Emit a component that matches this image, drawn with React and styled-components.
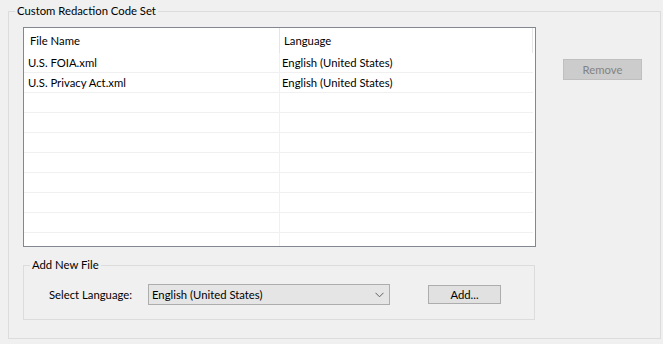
import React from 'react'
import styled, { createGlobalStyle } from 'styled-components'

const GlobalStyle = createGlobalStyle`
  html, body {
    margin: 0;
    padding: 0;
    background: #f0f0f0;
  }
  body {
    font-family: Lato, "Noto Sans", "Liberation Sans", sans-serif;
    font-size: 11.3px;
    color: #000;
  }
`;

const Page = styled.div`
  padding: 3px 0 0 8px;
`;

const GroupBox = styled.fieldset`
  box-sizing: border-box;
  margin: 0;
  min-width: 0;
  width: ${p => p.$width}px;
  border: 1px solid #dcdcdc;
  padding: 0;
`;

const GroupTitle = styled.legend`
  margin-left: 6px;
  padding: 0 2px;
  line-height: 16px;
  height: 16px;
`;

const GroupBody = styled.div`
  padding: ${p => p.$padding};
`;

const MainRow = styled.div`
  display: flex;
  align-items: flex-start;
  gap: 27px;
`;

const LeftColumn = styled.div`
  display: flex;
  flex-direction: column;
  gap: 10px;
`;

const ListBox = styled.div`
  box-sizing: border-box;
  width: 513px;
  height: 220px;
  border: 1px solid #828790;
  background: #fff;
  overflow: hidden;
`;

const HeaderRow = styled.div`
  display: flex;
  height: 25px;
`;

const HeaderCell = styled.div`
  box-sizing: border-box;
  width: ${p => p.$width}px;
  padding-left: ${p => p.$pad}px;
  line-height: 25px;
  border-right: 1px solid #e5e5e5;
`;

const DataRow = styled.div`
  display: flex;
  width: 509px;
  height: 20px;
  box-sizing: border-box;
  border-bottom: 1px solid #f0f0f0;
`;

const DataCell = styled.div`
  box-sizing: border-box;
  width: ${p => p.$width}px;
  padding-left: ${p => p.$pad}px;
  line-height: 19px;
  white-space: nowrap;
  border-right: ${p => (p.$last ? 'none' : '1px solid #f0f0f0')};
`;

const Button = styled.button`
  box-sizing: border-box;
  width: ${p => p.$width}px;
  height: ${p => p.$height}px;
  margin: 0;
  padding: 0;
  font-family: inherit;
  font-size: inherit;
  background: ${p => (p.disabled ? '#cccccc' : '#e1e1e1')};
  border: 1px solid ${p => (p.disabled ? '#bfbfbf' : '#adadad')};
  color: ${p => (p.disabled ? '#838383' : '#000')};
  border-radius: 0;
`;

const RemoveButton = styled(Button)`
  margin-top: 32px;
`;

const AddRow = styled.div`
  display: flex;
  align-items: center;
  padding-left: 25px;
`;

const Label = styled.span`
  width: 99px;
`;

const Combo = styled.div`
  box-sizing: border-box;
  width: 242px;
  height: 21px;
  display: flex;
  align-items: center;
  justify-content: space-between;
  padding: 0 5px 0 3px;
  background: #e5e5e5;
  border: 1px solid #adadad;
  margin-right: 38px;
`;

const Chevron = () => (
  <svg width="9" height="6" viewBox="0 0 9 6">
    <path d="M0.5 0.8 L4.5 4.8 L8.5 0.8" fill="none" stroke="#606060" strokeWidth="1" />
  </svg>
);

const files = [
  { name: 'U.S. FOIA.xml', lang: 'English (United States)' },
  { name: 'U.S. Privacy Act.xml', lang: 'English (United States)' },
];

export default function App() {
  const rows = [...files];
  while (rows.length < 10) rows.push({ name: '', lang: '' });

  return (
    <Page>
      <GlobalStyle />
      <GroupBox $width={653}>
        <GroupTitle>Custom Redaction Code Set</GroupTitle>
        <GroupBody $padding="8px 0 18px 14px">
          <MainRow>
            <LeftColumn>
              <ListBox>
                <HeaderRow>
                  <HeaderCell $width={256} $pad={6}>File Name</HeaderCell>
                  <HeaderCell $width={253} $pad={4}>Language</HeaderCell>
                </HeaderRow>
                {rows.map((r, i) => (
                  <DataRow key={i}>
                    <DataCell $width={256} $pad={4}>{r.name}</DataCell>
                    <DataCell $width={253} $pad={2} $last>{r.lang}</DataCell>
                  </DataRow>
                ))}
              </ListBox>
              <GroupBox $width={512}>
                <GroupTitle>Add New File</GroupTitle>
                <GroupBody $padding="11px 0 14px 0">
                  <AddRow>
                    <Label>Select Language:</Label>
                    <Combo>
                      <span>English (United States)</span>
                      <Chevron />
                    </Combo>
                    <Button $width={73} $height={19}>Add...</Button>
                  </AddRow>
                </GroupBody>
              </GroupBox>
            </LeftColumn>
            <RemoveButton $width={79} $height={21} disabled>Remove</RemoveButton>
          </MainRow>
        </GroupBody>
      </GroupBox>
    </Page>
  );
}
